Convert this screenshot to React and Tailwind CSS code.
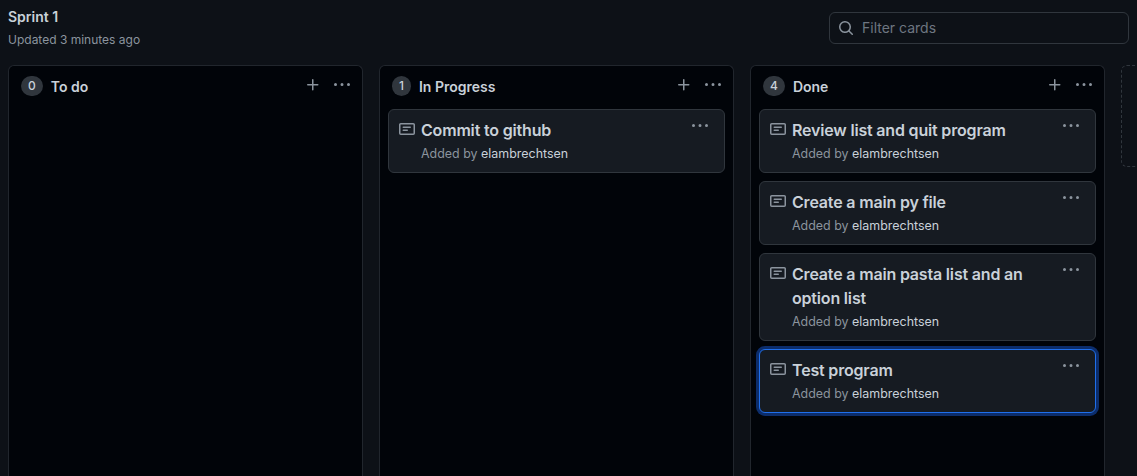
const notePath =
  "M0 3.75C0 2.784.784 2 1.75 2h12.5c.966 0 1.75.784 1.75 1.75v8.5A1.75 1.75 0 0 1 14.25 14H1.75A1.75 1.75 0 0 1 0 12.25Zm1.75-.25a.25.25 0 0 0-.25.25v8.5c0 .138.112.25.25.25h12.5a.25.25 0 0 0 .25-.25v-8.5a.25.25 0 0 0-.25-.25ZM3.5 6.25a.75.75 0 0 1 .75-.75h7a.75.75 0 0 1 0 1.5h-7a.75.75 0 0 1-.75-.75Zm.75 2.25h4a.75.75 0 0 1 0 1.5h-4a.75.75 0 0 1 0-1.5Z";
const kebabPath =
  "M8 9a1.5 1.5 0 1 0 0-3 1.5 1.5 0 0 0 0 3ZM1.5 9a1.5 1.5 0 1 0 0-3 1.5 1.5 0 0 0 0 3Zm13 0a1.5 1.5 0 1 0 0-3 1.5 1.5 0 0 0 0 3Z";
const plusPath =
  "M7.75 2a.75.75 0 0 1 .75.75V7h4.25a.75.75 0 0 1 0 1.5H8.5v4.25a.75.75 0 0 1-1.5 0V8.5H2.75a.75.75 0 0 1 0-1.5H7V2.75A.75.75 0 0 1 7.75 2Z";
const searchPath =
  "M10.68 11.74a6 6 0 0 1-7.922-8.982 6 6 0 0 1 8.982 7.922l3.04 3.04a.749.749 0 0 1-.326 1.275.749.749 0 0 1-.734-.215ZM11.5 7a4.499 4.499 0 1 0-8.997 0A4.499 4.499 0 0 0 11.5 7Z";

function Icon({ d, className }) {
  return (
    <svg viewBox="0 0 16 16" fill="currentColor" className={className}>
      <path d={d} />
    </svg>
  );
}

const columns = [
  { name: "To do", cards: [] },
  { name: "In Progress", cards: [{ title: "Commit to github" }] },
  {
    name: "Done",
    cards: [
      { title: "Review list and quit program" },
      { title: "Create a main py file" },
      { title: "Create a main pasta list and an option list" },
      { title: "Test program", focused: true },
    ],
  },
];

function Card({ title, focused }) {
  return (
    <div
      className={`flex rounded-md bg-[#161b22] pl-[10px] pr-4 pt-[8px] pb-[9px] ${
        focused
          ? "border border-[#1f6feb] shadow-[0_0_0_3px_#0c2d6b]"
          : "border border-[#30363d]"
      }`}
    >
      <Icon d={notePath} className="mt-[3px] h-4 w-4 shrink-0 text-[#8b949e]" />
      <div className="ml-[6px] min-w-0 flex-1">
        <p className="text-base leading-6 font-semibold tracking-[-0.18px] text-[#c9d1d9]">{title}</p>
        <p className="mt-[3px] text-[12.45px] leading-[18px] text-[#8b949e]">
          Added by <span className="text-[#c9d1d9]">elambrechtsen</span>
        </p>
      </div>
      <Icon d={kebabPath} className="h-4 w-4 shrink-0 text-[#8b949e]" />
    </div>
  );
}

function Column({ name, cards }) {
  return (
    <section className="h-[430px] w-[355px] shrink-0 rounded-md border border-b-0 border-[#21262d] bg-[#010409] px-2">
      <header className="flex h-[43px] items-start pl-1 pr-1 pt-[10px]">
        <span className="flex h-5 items-center justify-center rounded-full bg-[#30363d] px-[7px] text-xs font-medium text-[#c9d1d9]">
          {cards.length}
        </span>
        <h2 className="ml-2 flex-1 text-sm leading-[21px] font-semibold text-[#c9d1d9]">{name}</h2>
        <Icon d={plusPath} className="mt-[1px] h-4 w-4 text-[#8b949e]" />
        <Icon d={kebabPath} className="mt-[1px] ml-[13px] h-4 w-4 text-[#8b949e]" />
      </header>
      <div className="flex flex-col gap-2">
        {cards.map((card) => (
          <Card key={card.title} {...card} />
        ))}
      </div>
    </section>
  );
}

export default function App() {
  return (
    <div className="h-[476px] w-[1137px] overflow-hidden bg-[#0d1117] font-['Inter',sans-serif]">
      <div className="flex h-[65px] items-start justify-between pl-2 pr-2">
        <div className="pt-[8px]">
          <h1 className="text-sm leading-[18px] font-semibold text-[#c9d1d9]">Sprint 1</h1>
          <p className="mt-[5px] text-xs leading-[18px] text-[#8b949e]">Updated 3 minutes ago</p>
        </div>
        <div className="mt-3 flex h-8 w-[300px] items-center rounded-md border border-[#30363d] pl-2">
          <Icon d={searchPath} className="h-4 w-4 text-[#8b949e]" />
          <span className="ml-2 text-sm text-[#6e7681]">Filter cards</span>
        </div>
      </div>
      <div className="flex gap-4 pl-2">
        {columns.map((column) => (
          <Column key={column.name} {...column} />
        ))}
        <div className="h-[102px] w-[40px] shrink-0 rounded-md border border-dashed border-[#30363d]" />
      </div>
    </div>
  );
}
